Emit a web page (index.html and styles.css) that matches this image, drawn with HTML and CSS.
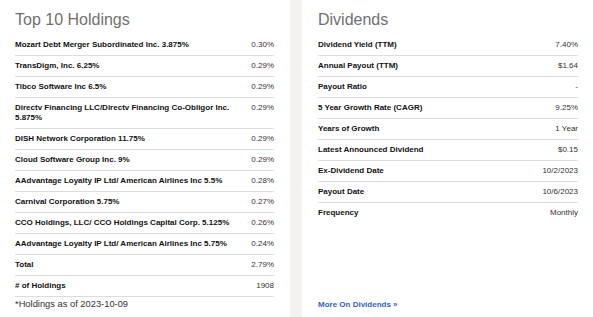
FILE: index.html
```html
<!DOCTYPE html>
<html>
<head>
<meta charset="utf-8">
<link rel="stylesheet" href="styles.css">
</head>
<body>
<div class="page">
  <section class="panel panel-left">
    <h2 class="title">Top 10 Holdings</h2>
    <div class="row"><span class="label">Mozart Debt Merger Subordinated Inc. 3.875%</span><span class="value">0.30%</span></div>
    <div class="row"><span class="label">TransDigm, Inc. 6.25%</span><span class="value">0.29%</span></div>
    <div class="row"><span class="label">Tibco Software Inc 6.5%</span><span class="value">0.29%</span></div>
    <div class="row"><span class="label">Directv Financing LLC/Directv Financing Co-Obligor Inc. 5.875%</span><span class="value">0.29%</span></div>
    <div class="row"><span class="label">DISH Network Corporation 11.75%</span><span class="value">0.29%</span></div>
    <div class="row"><span class="label">Cloud Software Group Inc. 9%</span><span class="value">0.29%</span></div>
    <div class="row"><span class="label">AAdvantage Loyalty IP Ltd/ American Airlines Inc 5.5%</span><span class="value">0.28%</span></div>
    <div class="row"><span class="label">Carnival Corporation 5.75%</span><span class="value">0.27%</span></div>
    <div class="row"><span class="label">CCO Holdings, LLC/ CCO Holdings Capital Corp. 5.125%</span><span class="value">0.26%</span></div>
    <div class="row"><span class="label">AAdvantage Loyalty IP Ltd/ American Airlines Inc 5.75%</span><span class="value">0.24%</span></div>
    <div class="row"><span class="label">Total</span><span class="value">2.79%</span></div>
    <div class="row"><span class="label"># of Holdings</span><span class="value">1908</span></div>
    <p class="note">*Holdings as of 2023-10-09</p>
  </section>
  <section class="panel panel-right">
    <h2 class="title">Dividends</h2>
    <div class="row"><span class="label">Dividend Yield (TTM)</span><span class="value">7.40%</span></div>
    <div class="row"><span class="label">Annual Payout (TTM)</span><span class="value">$1.64</span></div>
    <div class="row"><span class="label">Payout Ratio</span><span class="value">-</span></div>
    <div class="row"><span class="label">5 Year Growth Rate (CAGR)</span><span class="value">9.25%</span></div>
    <div class="row"><span class="label">Years of Growth</span><span class="value">1 Year</span></div>
    <div class="row"><span class="label">Latest Announced Dividend</span><span class="value">$0.15</span></div>
    <div class="row"><span class="label">Ex-Dividend Date</span><span class="value">10/2/2023</span></div>
    <div class="row"><span class="label">Payout Date</span><span class="value">10/6/2023</span></div>
    <div class="row row-last"><span class="label">Frequency</span><span class="value">Monthly</span></div>
    <a class="more" href="#">More On Dividends »</a>
  </section>
</div>
</body>
</html>
```
FILE: styles.css
```css
html, body {
  margin: 0;
  padding: 0;
}
body {
  background: #f4f1ef;
  font-family: "Liberation Sans", Arial, sans-serif;
  color: #222;
}
.page {
  display: flex;
  gap: 12px;
  height: 317px;
  overflow: hidden;
}
.panel {
  background: #fff;
  display: flex;
  flex-direction: column;
  padding-top: 10px;
  box-sizing: border-box;
}
.panel-left {
  width: 290px;
  padding-left: 15px;
  padding-right: 16px;
}
.panel-right {
  flex: 1;
  padding-left: 16px;
  padding-right: 15px;
  padding-bottom: 7px;
}
.title {
  margin: 0 0 5px;
  font-size: 16px;
  line-height: 20px;
  font-weight: normal;
  color: #707070;
}
.row {
  display: flex;
  justify-content: space-between;
  gap: 16px;
  padding: 5px 0;
  border-bottom: 1px solid #dddddd;
  font-size: 8px;
  line-height: 10px;
}
.row-last {
  border-bottom: none;
}
.label {
  font-weight: bold;
  color: #111;
}
.value {
  white-space: nowrap;
  text-align: right;
  color: #333;
}
.note {
  margin: 1px 0 0;
  font-size: 9.33px;
  line-height: 12px;
  color: #333;
}
.more {
  margin-top: auto;
  font-size: 8px;
  line-height: 10px;
  font-weight: bold;
  color: #3560c8;
  text-decoration: none;
}
```
